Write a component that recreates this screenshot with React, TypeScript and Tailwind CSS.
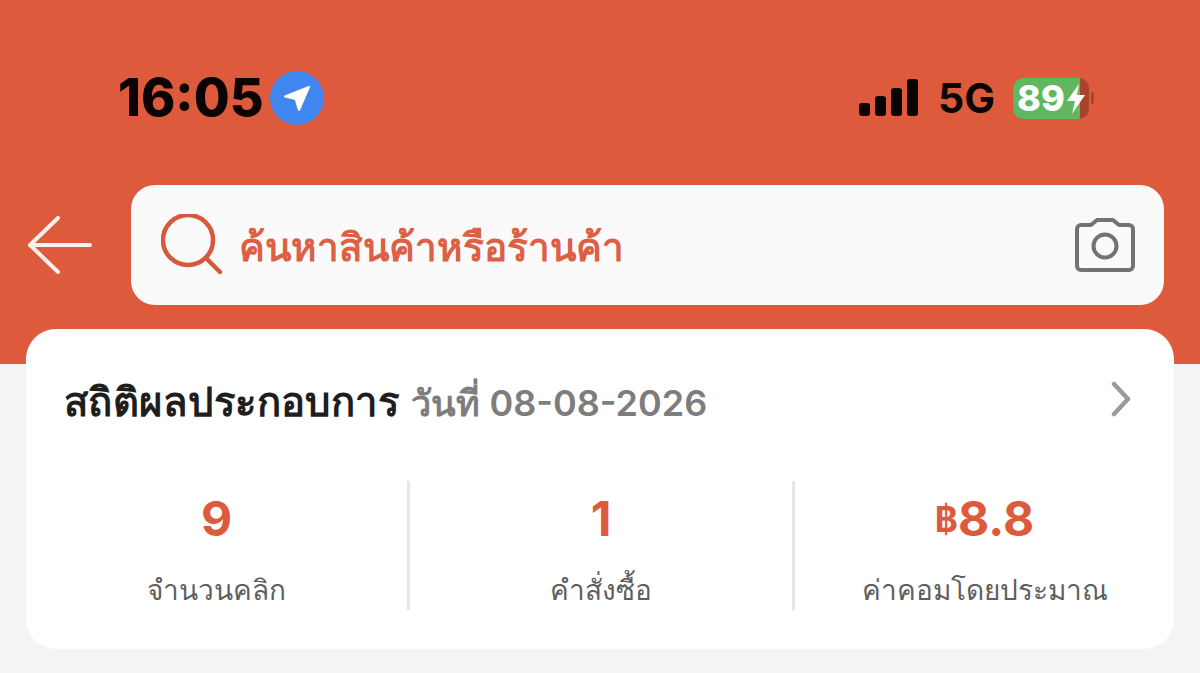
import React from "react";

function Stat({ value, label, divider }: { value: React.ReactNode; label: string; divider?: boolean }) {
  return (
    <div className={divider ? "flex-1 h-[129px] border-l-[3px] border-[#e6e6e6] flex flex-col items-center" : "flex-1 h-[129px] flex flex-col items-center"}>
      <div className="h-[76px] flex items-center text-[48px] font-bold text-[#dd5a3c] leading-none">{value}</div>
      <div className="mt-[15px] text-[28px] leading-[36px] text-[#5f5f5f]">{label}</div>
    </div>
  );
}

export default function App() {
  return (
    <div className="w-[1200px] h-[673px] overflow-hidden bg-[#f4f4f4] font-['Inter','Noto_Sans','Liberation_Sans',sans-serif]">
      <div className="h-[364px] bg-[#dd5a3c]">
        {/* status bar */}
        <div className="h-[185px] pt-[70px] pl-[118px] pr-[106px] flex items-start justify-between">
          <div className="flex items-center gap-[6px] h-[56px]">
            <span className="text-[52px] font-extrabold text-[#0a0503] leading-none">16:05</span>
            <div className="w-[54px] h-[54px] rounded-full bg-[#3f86f0] flex items-center justify-center">
              <svg width="30" height="30" viewBox="0 0 30 30">
                <path d="M27 4 L3 13.5 L13.5 16 L17 27 Z" fill="#fff" strokeLinejoin="round" stroke="#fff" strokeWidth="2" />
              </svg>
            </div>
          </div>
          <div className="flex items-center h-[56px]">
            <svg width="60" height="38" viewBox="0 0 60 38" fill="#0a0503">
              <rect x="0" y="24" width="11" height="13" rx="3" />
              <rect x="16" y="17" width="11" height="20" rx="3" />
              <rect x="32" y="9" width="11" height="28" rx="3" />
              <rect x="48" y="0" width="11" height="37" rx="3" />
            </svg>
            <span className="ml-[19px] text-[41px] font-bold text-[#0a0503] leading-none">5G</span>
            <div className="ml-[18px] relative w-[76px] h-[41px] rounded-[10px] bg-[#a8442c] overflow-hidden">
              <div className="w-[67px] h-[41px] bg-[#5fb85f] flex items-center pl-[4px] text-[36px] font-extrabold text-white leading-none">89</div>
              <svg className="absolute left-[54px] top-[6px]" width="18" height="30" viewBox="0 0 18 30" fill="#fff">
                <path d="M12 0 L0 17 L8 17 L5 30 L18 11 L10 11 Z" />
              </svg>
            </div>
            <div className="ml-[2px] w-[3px] h-[12px] rounded-r-full bg-[#a8442c]" />
          </div>
        </div>

        {/* search */}
        <div className="flex items-center pr-[36px]">
          <div className="w-[131px] flex items-center pl-[28px]">
            <svg width="64" height="58" viewBox="0 0 64 58" fill="none" stroke="#fbf1ec" strokeWidth="4" strokeLinecap="round" strokeLinejoin="round">
              <path d="M2 29 H62" />
              <path d="M30 2 L2 29 L30 56" />
            </svg>
          </div>
          <div className="flex-1 h-[120px] rounded-[24px] bg-[#fafafa] flex items-center pl-[30px] pr-[29px]">
            <svg width="62" height="62" viewBox="0 0 62 62" fill="none" stroke="#d6593c" strokeWidth="4.5" strokeLinecap="round">
              <circle cx="27" cy="26" r="25" />
              <path d="M46 45 L59 58" />
            </svg>
            <span className="ml-[16px] mt-[5px] text-[38.7px] font-bold text-[#dd5f44] leading-none">ค้นหาสินค้าหรือร้านค้า</span>
            <svg className="ml-auto" width="60" height="54" viewBox="0 0 60 54" fill="none" stroke="#737373" strokeWidth="4" strokeLinejoin="round">
              <path d="M6 7 H16 L22 2 H38 L44 7 H54 A4 4 0 0 1 58 11 V48 A4 4 0 0 1 54 52 H6 A4 4 0 0 1 2 48 V11 A4 4 0 0 1 6 7 Z" />
              <circle cx="30" cy="28" r="11.5" />
            </svg>
          </div>
        </div>
      </div>

      {/* stats card */}
      <div className="mt-[-35px] mx-[26px] h-[320px] rounded-[30px] bg-white">
        <div className="h-[152px] pl-[38px] pr-[43px] flex items-center justify-between">
          <div className="flex items-baseline gap-[12px] -mt-[7px]">
            <span className="text-[40px] tracking-[0.45px] font-bold text-[#1e1e1e] leading-none">สถิติผลประกอบการ</span>
            <span className="text-[36px] font-semibold text-[#7d7d7d] leading-none">วันที่ 08-08-2026</span>
          </div>
          <svg className="-mt-[12px]" width="20" height="36" viewBox="0 0 20 36" fill="none" stroke="#9a9a9a" strokeWidth="4.5" strokeLinecap="round" strokeLinejoin="round">
            <path d="M3 3 L17 18 L3 33" />
          </svg>
        </div>
        <div className="flex">
          <div className="w-[381px]"><Stat value="9" label="จำนวนคลิก" /></div>
          <div className="w-[385px]"><Stat value="1" label="คำสั่งซื้อ" divider /></div>
          <div className="flex-1"><Stat value={<><span className="text-[35px]">฿</span>8.8</>} label="ค่าคอมโดยประมาณ" divider /></div>
        </div>
      </div>
    </div>
  );
}
